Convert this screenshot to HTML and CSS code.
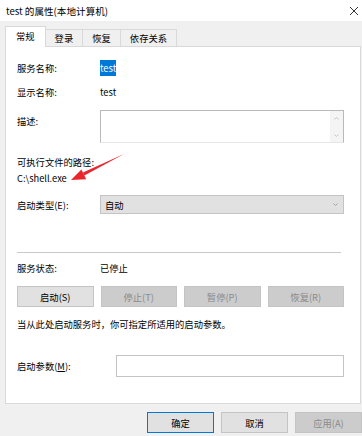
FILE: index.html
```html
<!DOCTYPE html>
<html lang="zh-CN">
<head>
    <meta charset="UTF-8">
    <title>test 的属性(本地计算机)</title>
    <link rel="stylesheet" href="styles.css">
</head>
<body>
    <div class="window">
        <div class="titlebar">
            <span class="title">test 的属性(本地计算机)</span>
            <svg class="close" width="10" height="10" viewBox="0 0 10 10">
                <path d="M1 1 L9 9 M9 1 L1 9" stroke="#333" stroke-width="1" fill="none"/>
            </svg>
        </div>

        <div class="tabs">
            <div class="tab active">常规</div>
            <div class="tab">登录</div>
            <div class="tab">恢复</div>
            <div class="tab">依存关系</div>
        </div>

        <div class="panel">
            <div class="row r-name">
                <span class="label">服务名称:</span>
                <span class="value"><span class="selected">test</span></span>
            </div>
            <div class="row r-display">
                <span class="label">显示名称:</span>
                <span class="value">test</span>
            </div>
            <div class="row r-desc">
                <span class="label">描述:</span>
                <div class="textarea">
                    <div class="scrollbar">
                        <svg width="7" height="5" viewBox="0 0 7 5"><path d="M1.5 3.5 L3.5 1.5 L5.5 3.5" stroke="#c4c4c4" fill="none"/></svg>
                        <svg width="7" height="5" viewBox="0 0 7 5"><path d="M1.5 1.5 L3.5 3.5 L5.5 1.5" stroke="#c4c4c4" fill="none"/></svg>
                    </div>
                </div>
            </div>
            <div class="line r-path-label">可执行文件的路径:</div>
            <div class="line">C:\shell.exe</div>
            <div class="row r-type">
                <span class="label">启动类型(E):</span>
                <div class="select">
                    <span>自动</span>
                    <svg width="7" height="5" viewBox="0 0 7 5"><path d="M1.5 1.5 L3.5 3.5 L5.5 1.5" stroke="#a0a0a0" fill="none"/></svg>
                </div>
            </div>

            <div class="divider"></div>

            <div class="row r-status">
                <span class="label">服务状态:</span>
                <span class="value">已停止</span>
            </div>
            <div class="actions">
                <button class="btn">启动(S)</button>
                <button class="btn" disabled>停止(T)</button>
                <button class="btn" disabled>暂停(P)</button>
                <button class="btn" disabled>恢复(R)</button>
            </div>
            <div class="line r-note">当从此处启动服务时，你可指定所适用的启动参数。</div>
            <div class="row r-params">
                <span class="label wide">启动参数(<u>M</u>):</span>
                <div class="input"></div>
            </div>
        </div>

        <div class="footer">
            <button class="btn default">确定</button>
            <button class="btn">取消</button>
            <button class="btn" disabled>应用(A)</button>
        </div>

        <!-- 标注箭头 -->
        <svg class="arrow" width="362" height="436" viewBox="0 0 362 436">
            <polygon points="124,154 84.4,175.6 82.9,172.4" fill="#e8262b"/>
            <polygon points="71,180 81.4,169.5 86.2,179.3" fill="#e8262b"/>
        </svg>
    </div>
</body>
</html>
```

FILE: styles.css
```css
* {
    margin: 0;
    padding: 0;
    box-sizing: border-box;
}

body {
    width: 362px;
    height: 436px;
    overflow: hidden;
    background: #f0f0f0;
    font-family: "Noto Sans CJK SC", "Noto Sans", sans-serif;
    font-size: 9.3px;
    color: #000;
}

u {
    text-decoration: underline;
    text-underline-offset: 1px;
}

.window {
    position: relative;
    width: 362px;
    height: 436px;
}

.titlebar {
    height: 21px;
    background: #fff;
    display: flex;
    align-items: center;
    justify-content: space-between;
    padding: 0 3px 0 6px;
    font-size: 9.6px;
}

/* tab strip */
.tabs {
    height: 25px;
    display: flex;
    align-items: flex-end;
    padding-left: 5px;
}

.tab {
    height: 17px;
    line-height: 16px;
    padding: 0 9px;
    border: 1px solid #d9d9d9;
    border-bottom: none;
    margin-left: -1px;
    background: #f0f0f0;
}

.tab.active {
    height: 21px;
    line-height: 18px;
    padding: 0 10px;
    margin-left: 0;
    margin-bottom: -1px;
    background: #fff;
    position: relative;
    z-index: 1;
}

/* main panel */
.panel {
    height: 358px;
    margin: 0 1px 0 5px;
    border: 1px solid #d9d9d9;
    background: #fff;
    padding: 0 16px 0 11px;
}

.row {
    display: flex;
    align-items: center;
    min-height: 16px;
}

.line {
    height: 16px;
    line-height: 16px;
}

.label {
    width: 83px;
    flex-shrink: 0;
}

.label.wide {
    width: 99px;
}

.selected {
    background: #0078d7;
    color: #fff;
    padding: 1px 0;
}

.r-name { margin-top: 13px; }
.r-display { margin-top: 8px; }

.r-desc {
    margin-top: 10px;
    align-items: flex-start;
}

.r-desc .label {
    padding-top: 4px;
}

.textarea {
    flex: 1;
    height: 33px;
    border: 1px solid #b9b9b9;
    border-bottom-color: #e6e6e6;
    display: flex;
    justify-content: flex-end;
}

.scrollbar {
    width: 13px;
    background: #f4f4f4;
    display: flex;
    flex-direction: column;
    justify-content: space-between;
    align-items: center;
    padding: 5px 0 4px;
}

.r-path-label { margin-top: 11px; }

.r-type { margin-top: 9px; }

.select {
    flex: 1;
    height: 19px;
    background: #e1e1e1;
    border: 1px solid #c4c4c4;
    display: flex;
    align-items: center;
    justify-content: space-between;
    padding: 0 4px 0 4px;
}

.divider {
    margin: 38px 3px 0 0;
    height: 1px;
    background: #c9c9c9;
}

.r-status { margin-top: 7px; }

.actions {
    margin-top: 10px;
    display: grid;
    grid-template-columns: repeat(4, 1fr);
    gap: 7px;
}

.btn {
    height: 21px;
    font-family: inherit;
    font-size: 9.3px;
    color: #000;
    background: #e1e1e1;
    border: 1px solid #c4c4c4;
}

.btn:disabled {
    background: #cccccc;
    border-color: #c4c4c4;
    color: #8b8b8b;
}

.r-note { margin-top: 9px; }

.r-params { margin-top: 23px; }

.input {
    flex: 1;
    height: 22px;
    border: 1px solid #c4c4c4;
    background: #fff;
}

/* dialog buttons */
.footer {
    margin-top: 8px;
    padding-left: 147px;
    display: flex;
    gap: 7px;
}

.footer .btn {
    width: 67px;
    flex-shrink: 0;
}

.footer .btn.default {
    border-color: #0078d7;
}

.arrow {
    position: absolute;
    left: 0;
    top: 0;
    pointer-events: none;
}
```
